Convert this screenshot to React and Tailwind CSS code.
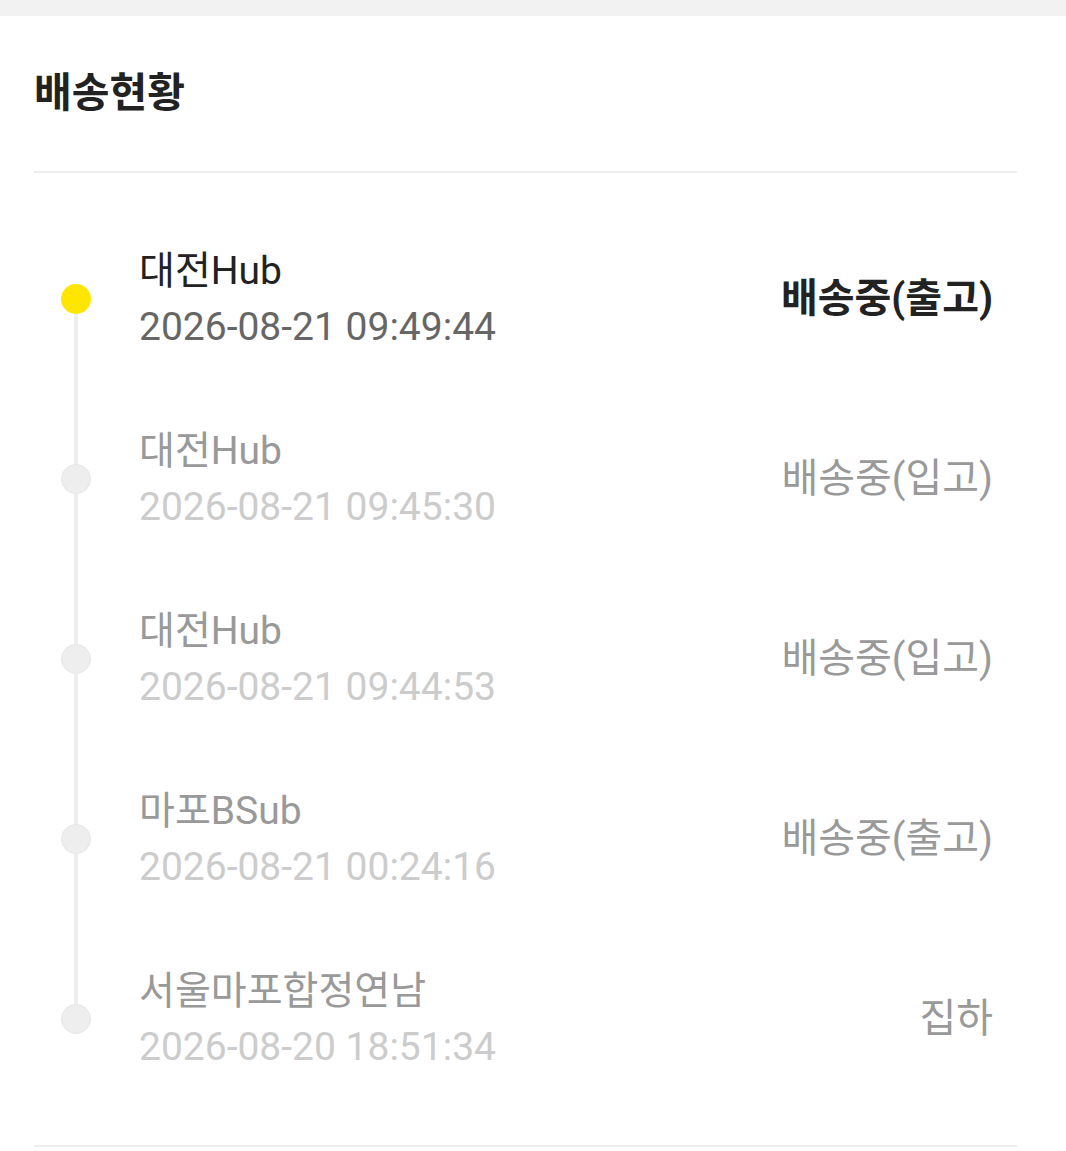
const font = { fontFamily: 'Roboto, "Noto Sans CJK KR", sans-serif' };

const events = [
  { place: '대전Hub', time: '2026-08-21 09:49:44', status: '배송중(출고)' },
  { place: '대전Hub', time: '2026-08-21 09:45:30', status: '배송중(입고)' },
  { place: '대전Hub', time: '2026-08-21 09:44:53', status: '배송중(입고)' },
  { place: '마포BSub', time: '2026-08-21 00:24:16', status: '배송중(출고)' },
  { place: '서울마포합정연남', time: '2026-08-20 18:51:34', status: '집하' },
];

export default function App() {
  return (
    <div className="w-[1066px] min-h-[1151px] bg-white" style={font}>
      <div className="h-4 bg-[#f2f2f2]" />

      <div className="ml-[34px] mr-[49px]">
        {/* Header */}
        <div className="h-[155px] flex items-center">
          <h1 className="text-[41px] font-bold text-[#222] leading-none">배송현황</h1>
        </div>
        <div className="h-[2px] bg-[#eeeeee]" />

        {/* Timeline */}
        <div className="py-[36px]">
          {events.map((ev, i) => {
            const active = i === 0;
            const first = i === 0;
            const last = i === events.length - 1;
            return (
              <div key={i} className="h-[180px] flex items-stretch">
                <div className="w-[30px] ml-[27px] flex flex-col items-center shrink-0">
                  <div className={'w-1 flex-1 ' + (first ? 'bg-transparent' : 'bg-[#eeeeee]')} />
                  <div
                    className={
                      'w-[30px] h-[30px] rounded-full shrink-0 ' +
                      (active ? 'bg-[#ffe600]' : 'bg-[#eeeeee] border border-[#e6e6e6]')
                    }
                  />
                  <div className={'w-1 flex-1 ' + (last ? 'bg-transparent' : 'bg-[#eeeeee]')} />
                </div>
                <div className="flex-1 flex items-center justify-between pl-[48px] pr-[24px]">
                  <div className="text-[39px] leading-[56px]">
                    <div className={active ? 'text-[#222]' : 'text-[#999]'}>{ev.place}</div>
                    <div className={active ? 'text-[#666]' : 'text-[#cccccc]'}>{ev.time}</div>
                  </div>
                  <div
                    className={
                      'text-[40px] leading-none ' +
                      (active ? 'font-bold text-[#222]' : 'text-[#999]')
                    }
                  >
                    {ev.status}
                  </div>
                </div>
              </div>
            );
          })}
        </div>
        <div className="h-[2px] bg-[#eeeeee]" />
      </div>
    </div>
  );
}
